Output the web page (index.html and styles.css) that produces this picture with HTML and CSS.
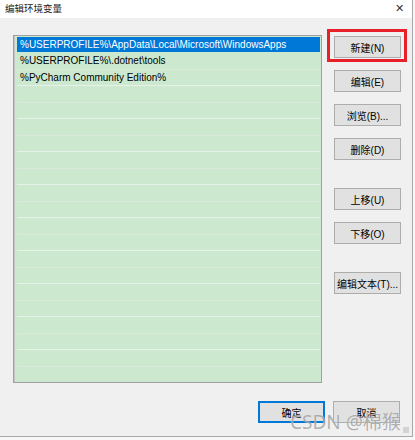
FILE: index.html
```html
<!DOCTYPE html>
<html lang="zh-CN">
<head>
    <meta charset="UTF-8">
    <title>编辑环境变量</title>
    <link rel="stylesheet" href="styles.css">
</head>
<body>
    <div class="dialog">
        <div class="titlebar">
            <span class="title">编辑环境变量</span>
            <span class="close">✕</span>
        </div>

        <div class="dialog-body">
            <div class="path-list">
                <div class="row selected">%USERPROFILE%\AppData\Local\Microsoft\WindowsApps</div>
                <div class="row">%USERPROFILE%\.dotnet\tools</div>
                <div class="row">%PyCharm Community Edition%</div>
                <div class="row"></div>
                <div class="row"></div>
                <div class="row"></div>
                <div class="row"></div>
                <div class="row"></div>
                <div class="row"></div>
                <div class="row"></div>
                <div class="row"></div>
                <div class="row"></div>
                <div class="row"></div>
                <div class="row"></div>
                <div class="row"></div>
                <div class="row"></div>
                <div class="row"></div>
                <div class="row"></div>
                <div class="row"></div>
                <div class="row"></div>
                <div class="row"></div>
            </div>

            <div class="side-buttons">
                <div class="btn-group">
                    <button class="win-btn highlight">新建(N)</button>
                    <button class="win-btn">编辑(E)</button>
                    <button class="win-btn">浏览(B)...</button>
                    <button class="win-btn">删除(D)</button>
                </div>
                <div class="btn-group">
                    <button class="win-btn">上移(U)</button>
                    <button class="win-btn">下移(O)</button>
                </div>
                <div class="btn-group">
                    <button class="win-btn">编辑文本(T)...</button>
                </div>
            </div>
        </div>

        <div class="dialog-footer">
            <button class="win-btn default">确定</button>
            <button class="win-btn">取消</button>
        </div>

        <div class="grip"></div>
        <div class="watermark">CSDN @棉猴</div>
    </div>
</body>
</html>
```

FILE: styles.css
```css
* {
    margin: 0;
    padding: 0;
    box-sizing: border-box;
}

body {
    width: 415px;
    height: 440px;
    background: #f7f7f7;
    font-family: "Liberation Sans", "Noto Sans CJK SC", sans-serif;
    font-size: 10px;
    color: #000;
    overflow: hidden;
}

.dialog {
    position: relative;
    width: 413px;
    height: 437px;
    background: #f0f0f0;
    border-right: 1px solid #a9a9a9;
    border-bottom: 1px solid #a9a9a9;
    display: flex;
    flex-direction: column;
}

.titlebar {
    height: 18px;
    background: #fff;
    display: flex;
    align-items: center;
    justify-content: space-between;
    padding: 0 8px 2px 5px;
}

.title {
    font-size: 9.5px;
    color: #222;
}

.close {
    font-size: 11px;
    color: #333;
}

.dialog-body {
    display: flex;
    padding: 17px 0 0 13px;
}

.path-list {
    width: 309px;
    height: 348px;
    background: #cce8cf;
    border: 1px solid #a0a0a0;
    box-shadow: inset 1px 0 0 #c4c4c4;
    padding: 1px 1px 0 3px;
    overflow: hidden;
}

.row {
    height: 16px;
    line-height: 16px;
    padding-left: 3px;
    border-bottom: 1px solid #e6f2e8;
    white-space: nowrap;
    font-size: 10px;
}

.row:nth-child(even) {
    height: 17px;
    border-bottom-color: #dbe9dd;
}

.row.selected {
    background: #0078d7;
    color: #fff;
    border-bottom-color: #cce8cf;
}

.side-buttons {
    display: flex;
    flex-direction: column;
    gap: 28px;
    margin-left: 12px;
    padding-top: 1px;
}

.btn-group {
    display: flex;
    flex-direction: column;
    gap: 12px;
}

.win-btn {
    width: 67px;
    height: 22px;
    background: #e1e1e1;
    border: 1px solid #adadad;
    font-family: "Liberation Sans", "Noto Sans CJK SC", sans-serif;
    font-size: 10px;
    color: #000;
    position: relative;
}

/* red annotation frame round the first button */
.win-btn.highlight::after {
    content: "";
    position: absolute;
    left: -8px;
    top: -8px;
    right: -7px;
    bottom: -5px;
    border: 3px solid #e8202a;
}

.win-btn.default {
    border: 2px solid #0078d7;
}

.dialog-footer {
    display: flex;
    justify-content: flex-end;
    gap: 8px;
    padding: 18px 12px 0 0;
}

.grip {
    position: absolute;
    right: 3px;
    bottom: 3px;
    width: 6px;
    height: 6px;
    background: radial-gradient(circle, #b0b0b0 0.6px, transparent 0.8px) 0 0 / 2px 2px;
}

.watermark {
    position: absolute;
    left: 290px;
    top: 407px;
    font-family: "Noto Sans", "Noto Sans CJK SC", sans-serif;
    font-size: 19px;
    color: rgba(110, 110, 110, 0.55);
    text-shadow: 0 0 1px rgba(255, 255, 255, 0.8);
    white-space: nowrap;
}
```
